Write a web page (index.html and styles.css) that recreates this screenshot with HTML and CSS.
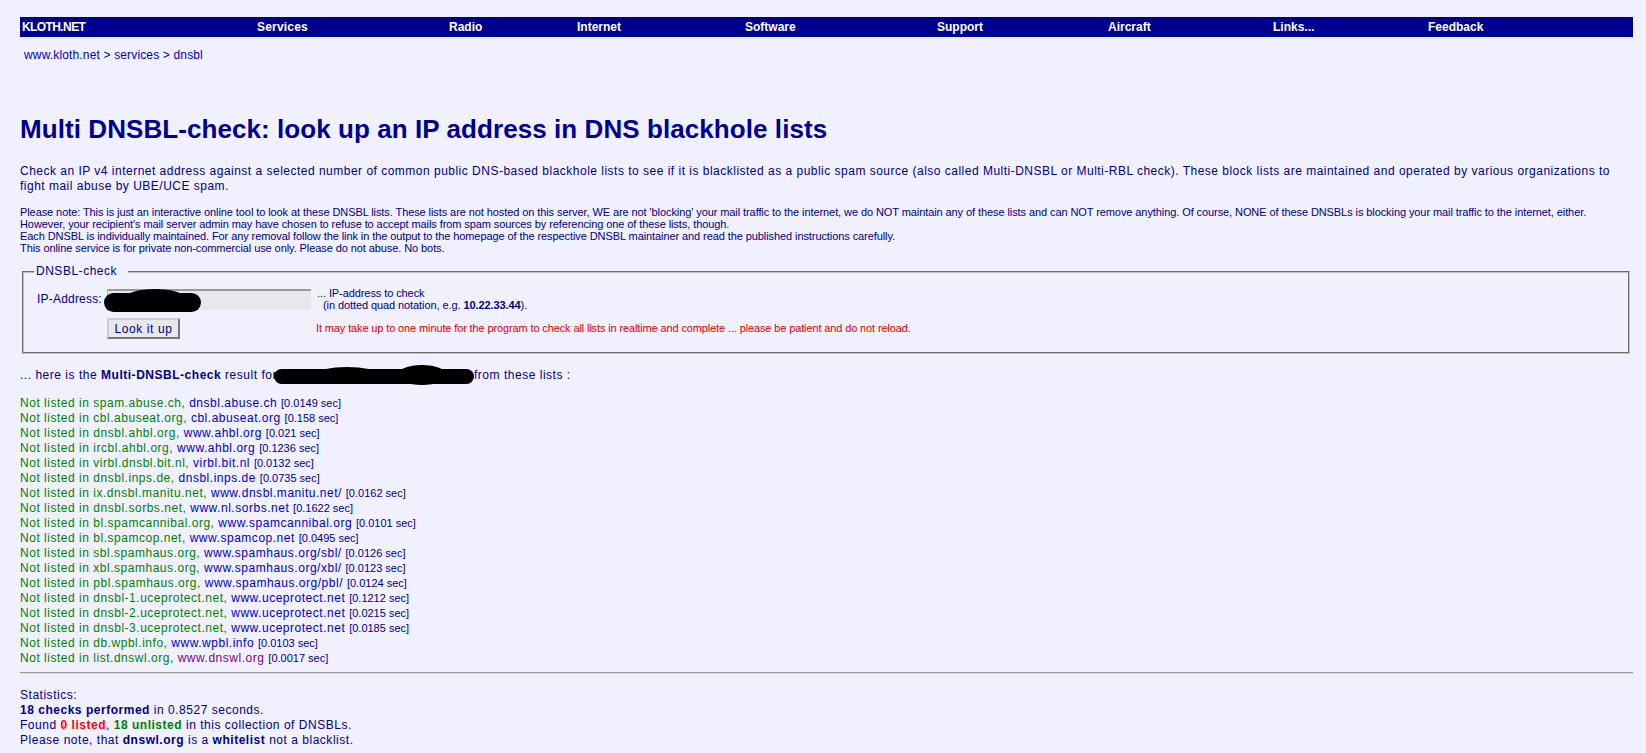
FILE: index.html
```html
<!DOCTYPE html>
<html lang="en">

<head>
    <meta charset="UTF-8" />
    <meta name="viewport" content="width=device-width, initial-scale=1.0" />
    <title>Multi DNSBL-check</title>
    <link rel="stylesheet" href="styles.css">
</head>

<body>

    <nav class="topnav">
        <a class="nav-home" href="#">KLOTH.NET</a>
        <a class="nav-services" href="#">Services</a>
        <a class="nav-radio" href="#">Radio</a>
        <a class="nav-internet" href="#">Internet</a>
        <a class="nav-software" href="#">Software</a>
        <a class="nav-support" href="#">Support</a>
        <a class="nav-aircraft" href="#">Aircraft</a>
        <a class="nav-links" href="#">Links...</a>
        <a class="nav-feedback" href="#">Feedback</a>
    </nav>

    <div class="crumbs"><a href="#">www.kloth.net</a> &gt; <a href="#">services</a> &gt; <a href="#">dnsbl</a></div>

    <h1>Multi DNSBL-check: look up an IP address in DNS blackhole lists</h1>

    <p class="intro">Check an IP v4 internet address against a selected number of common public DNS-based blackhole lists to see if it is blacklisted as a public spam source (also called Multi-DNSBL or Multi-RBL check). These block lists are maintained and operated by various organizations to fight mail abuse by UBE/UCE spam.</p>

    <p class="note">Please note: This is just an interactive online tool to look at these DNSBL lists. These lists are not hosted on this server, WE are not 'blocking' your mail traffic to the internet, we do NOT maintain any of these lists and can NOT remove anything. Of course, NONE of these DNSBLs is blocking your mail traffic to the internet, either.<br>
    However, your recipient's mail server admin may have chosen to refuse to accept mails from spam sources by referencing one of these lists, though.<br>
    Each DNSBL is individually maintained. For any removal follow the link in the output to the homepage of the respective DNSBL maintainer and read the published instructions carefully.<br>
    This online service is for private non-commercial use only. Please do not abuse. No bots.</p>

    <fieldset class="checkbox">
        <legend>DNSBL-check&nbsp;</legend>
        <div class="form-row">
            <label for="ip">IP-Address:</label>
            <div class="ip-wrap">
                <input id="ip" type="text">
                <span class="blot blot-ip"></span>
                <span class="blot blot-ip2"></span>
            </div>
            <div class="hint">... IP-address to check<br>&nbsp;&nbsp;(in dotted quad notation, e.g. <b>10.22.33.44</b>).</div>
        </div>
        <div class="form-row form-row-2">
            <button type="button">Look it up</button>
            <div class="wait">It may take up to one minute for the program to check all lists in realtime and complete ... please be patient and do not reload.</div>
        </div>
    </fieldset>

    <p class="result-head">... here is the <b>Multi-DNSBL-check</b> result for<span class="blot-wrap"><span class="blot blot-a"></span><span class="blot blot-b"></span><span class="blot blot-c"></span></span>from these lists :</p>

    <div class="results">
        <div><span class="ok">Not listed in spam.abuse.ch,</span> <a href="#">dnsbl.abuse.ch</a> <small>[0.0149 sec]</small></div>
        <div><span class="ok">Not listed in cbl.abuseat.org,</span> <a href="#">cbl.abuseat.org</a> <small>[0.158 sec]</small></div>
        <div><span class="ok">Not listed in dnsbl.ahbl.org,</span> <a href="#">www.ahbl.org</a> <small>[0.021 sec]</small></div>
        <div><span class="ok">Not listed in ircbl.ahbl.org,</span> <a href="#">www.ahbl.org</a> <small>[0.1236 sec]</small></div>
        <div><span class="ok">Not listed in virbl.dnsbl.bit.nl,</span> <a href="#">virbl.bit.nl</a> <small>[0.0132 sec]</small></div>
        <div><span class="ok">Not listed in dnsbl.inps.de,</span> <a href="#">dnsbl.inps.de</a> <small>[0.0735 sec]</small></div>
        <div><span class="ok">Not listed in ix.dnsbl.manitu.net,</span> <a href="#">www.dnsbl.manitu.net/</a> <small>[0.0162 sec]</small></div>
        <div><span class="ok">Not listed in dnsbl.sorbs.net,</span> <a href="#">www.nl.sorbs.net</a> <small>[0.1622 sec]</small></div>
        <div><span class="ok">Not listed in bl.spamcannibal.org,</span> <a href="#">www.spamcannibal.org</a> <small>[0.0101 sec]</small></div>
        <div><span class="ok">Not listed in bl.spamcop.net,</span> <a href="#">www.spamcop.net</a> <small>[0.0495 sec]</small></div>
        <div><span class="ok">Not listed in sbl.spamhaus.org,</span> <a href="#">www.spamhaus.org/sbl/</a> <small>[0.0126 sec]</small></div>
        <div><span class="ok">Not listed in xbl.spamhaus.org,</span> <a href="#">www.spamhaus.org/xbl/</a> <small>[0.0123 sec]</small></div>
        <div><span class="ok">Not listed in pbl.spamhaus.org,</span> <a href="#">www.spamhaus.org/pbl/</a> <small>[0.0124 sec]</small></div>
        <div><span class="ok">Not listed in dnsbl-1.uceprotect.net,</span> <a href="#">www.uceprotect.net</a> <small>[0.1212 sec]</small></div>
        <div><span class="ok">Not listed in dnsbl-2.uceprotect.net,</span> <a href="#">www.uceprotect.net</a> <small>[0.0215 sec]</small></div>
        <div><span class="ok">Not listed in dnsbl-3.uceprotect.net,</span> <a href="#">www.uceprotect.net</a> <small>[0.0185 sec]</small></div>
        <div><span class="ok">Not listed in db.wpbl.info,</span> <a href="#">www.wpbl.info</a> <small>[0.0103 sec]</small></div>
        <div><span class="ok">Not listed in list.dnswl.org,</span> <a class="visited" href="#">www.dnswl.org</a> <small>[0.0017 sec]</small></div>
    </div>

    <hr>

    <div class="stats">
        Statistics:<br>
        <b>18 checks performed</b> in 0.8527 seconds.<br>
        Found <b class="red">0 listed</b>, <b class="green">18 unlisted</b> in this collection of DNSBLs.<br>
        Please note, that <b>dnswl.org</b> is a <b>whitelist</b> not a blacklist.
    </div>

</body>

</html>
```

FILE: styles.css
```css
body {
    font-family: "Liberation Sans", Arial, sans-serif;
    font-size: 12px;
    letter-spacing: 0.52px;
    line-height: 15px;
    color: #000080;
    background: #f0f0ff;
    margin: 0;
    padding: 17px 13px 0 20px;
}

a {
    color: #0000c0;
    text-decoration: none;
}

a.visited {
    color: #800080;
}

.topnav {
    display: flex;
    background: #000090;
    height: 20px;
    align-items: center;
    padding-left: 2px;
    letter-spacing: 0;
}

.topnav a {
    color: white;
    font-weight: bold;
}

.nav-home { width: 235px; letter-spacing: -0.6px; }
.nav-services { width: 192px; letter-spacing: 0.2px; }
.nav-radio { width: 128px; }
.nav-internet { width: 168px; }
.nav-software { width: 192px; }
.nav-support { width: 171px; }
.nav-aircraft { width: 165px; }
.nav-links { width: 155px; }

.crumbs {
    margin: 11px 0 0 4px;
    letter-spacing: 0.15px;
}

h1 {
    color: #000090;
    font-size: 26px;
    line-height: 30px;
    letter-spacing: 0.07px;
    margin: 51px 0 0;
}

.intro {
    letter-spacing: 0.49px;
    margin: 20px 0 0;
}

.note {
    font-size: 11px;
    line-height: 12px;
    letter-spacing: -0.085px;
    margin: 12px 0 0;
}

.checkbox {
    margin: 10px 3px 0 2px;
    padding: 10px 0 0 13px;
    border: 2px groove #c0c0c0;
    height: 76px;
}

.checkbox legend {
    padding: 0 7px 0 2px;
    margin-left: -3px;
}

.form-row {
    display: flex;
    align-items: flex-start;
}

.form-row label {
    width: 70px;
    padding-top: 3px;
    flex: none;
    letter-spacing: 0.2px;
}

.ip-wrap {
    position: relative;
    width: 204px;
    height: 21px;
    flex: none;
    margin-right: 6px;
}

.ip-wrap input {
    width: 100%;
    height: 100%;
    box-sizing: border-box;
    background: #e8e8e8;
    border: none;
    border-top: 2px solid #999;
    border-left: 1px solid #bbb;
    padding: 0;
    display: block;
}

.hint {
    font-size: 11px;
    line-height: 12px;
    letter-spacing: -0.085px;
    margin-top: -2px;
}

.form-row-2 {
    margin: 7px 0 0 70px;
    align-items: center;
}

.form-row-2 button {
    width: 73px;
    height: 21px;
    flex: none;
    margin-right: 136px;
    padding: 0;
    background: #e8e8e8;
    border: 2px outset #ccc;
    color: #000080;
    font: 12px "Liberation Sans", Arial, sans-serif;
    letter-spacing: 0.6px;
}

.wait {
    font-size: 11px;
    letter-spacing: -0.125px;
    color: #e00000;
}

.blot {
    position: absolute;
    background: black;
    border-radius: 50%;
}

.blot-ip {
    left: -3px;
    top: 4px;
    width: 97px;
    height: 19px;
    border-radius: 10px;
}

.blot-ip2 {
    left: 18px;
    top: 0;
    width: 60px;
    height: 18px;
}

.result-head {
    margin: 14px 0 0;
}

.blot-wrap {
    position: relative;
    display: inline-block;
    width: 0;
    height: 15px;
    margin-right: 197px;
    vertical-align: top;
}

.blot-a {
    left: -3px;
    top: 1px;
    width: 200px;
    height: 15px;
    border-radius: 8px;
}

.blot-b {
    left: 40px;
    top: -1px;
    width: 60px;
    height: 14px;
}

.blot-c {
    left: 120px;
    top: -3px;
    width: 50px;
    height: 20px;
}

.results {
    margin-top: 13px;
}

.results .ok {
    color: #008000;
}

.results small {
    font-size: 11px;
    letter-spacing: 0;
}

hr {
    margin: 6px 0 0;
    border: 0;
    border-top: 1px solid #999;
    border-bottom: 1px solid #ddd;
}

.stats {
    margin-top: 14px;
}

.red {
    color: #ff0000;
}

.green {
    color: #008000;
}
```
